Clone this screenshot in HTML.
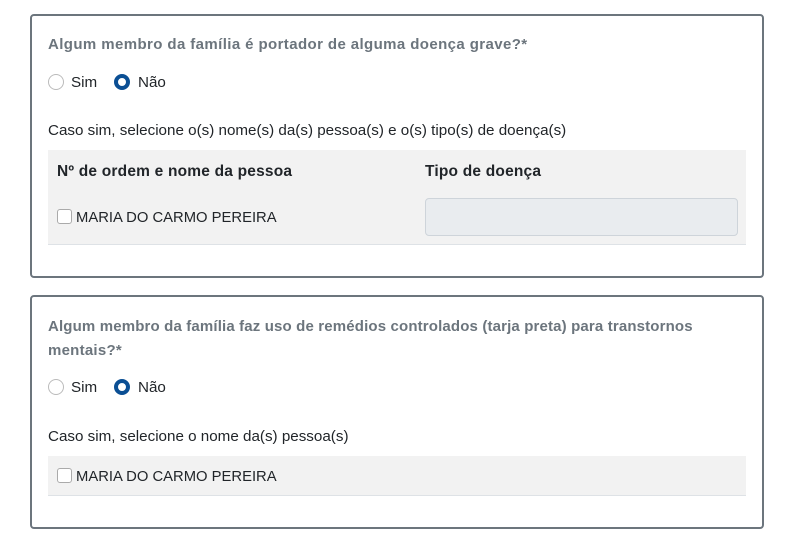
<!DOCTYPE html>
<html><head><meta charset="utf-8"><style>
*{box-sizing:border-box;margin:0;padding:0}
body{width:792px;height:541px;background:#fff;font-family:"Liberation Sans",sans-serif;font-size:15.2px;color:#212529;position:relative;overflow:hidden}
.box{position:absolute;left:30px;width:734px;border:2px solid #6c757d;border-radius:4px}
.t{position:absolute;white-space:nowrap;line-height:18px}
.title{color:#6c757d;font-weight:bold;font-size:15px;letter-spacing:0.25px}
.r{position:absolute;width:16px;height:16px;border-radius:50%}
.off{border:1px solid #bbb;background:#fff}
.on{border:4.5px solid #0b4f94;background:#fff}
.cb{position:absolute;width:15px;height:15px;border:1px solid #aaa;border-radius:3px;background:#fff}
.bg{position:absolute;left:48px;width:698px;background:#f2f2f2;border-bottom:1px solid #dee2e6}
.nm{font-size:14.8px}
</style></head><body>
<div class="box" style="top:14px;height:264px"></div>
<div class="t title" style="left:48px;top:36px;letter-spacing:0.4px">Algum membro da família é portador de alguma doença grave?*</div>
<div class="r off" style="left:48px;top:74px"></div><div class="t" style="left:71px;top:74px">Sim</div>
<div class="r on" style="left:114px;top:74px"></div><div class="t" style="left:138px;top:74px">Não</div>
<div class="t" style="left:48px;top:122px">Caso sim, selecione o(s) nome(s) da(s) pessoa(s) e o(s) tipo(s) de doença(s)</div>
<div class="bg" style="top:150px;height:95px"></div>
<div class="t" style="left:57px;top:163px;font-weight:bold;letter-spacing:0.2px;font-size:15.5px">Nº de ordem e nome da pessoa</div>
<div class="t" style="left:425px;top:163px;font-weight:bold;letter-spacing:0.2px;font-size:15.5px">Tipo de doença</div>
<div class="cb" style="left:57px;top:209px"></div><div class="t nm" style="left:76px;top:209px">MARIA DO CARMO PEREIRA</div>
<div style="position:absolute;left:425px;top:198px;width:313px;height:38px;background:#e9ecef;border:1px solid #ced4da;border-radius:4px"></div>

<div class="box" style="top:295px;height:234px"></div>
<div class="t title" style="left:48px;top:318px;letter-spacing:0.15px">Algum membro da família faz uso de remédios controlados (tarja preta) para transtornos</div>
<div class="t title" style="left:48px;top:342px">mentais?*</div>
<div class="r off" style="left:48px;top:379px"></div><div class="t" style="left:71px;top:379px">Sim</div>
<div class="r on" style="left:114px;top:379px"></div><div class="t" style="left:138px;top:379px">Não</div>
<div class="t" style="left:48px;top:428px">Caso sim, selecione o nome da(s) pessoa(s)</div>
<div class="bg" style="top:456px;height:40px"></div>
<div class="cb" style="left:57px;top:468px"></div><div class="t nm" style="left:76px;top:468px">MARIA DO CARMO PEREIRA</div>
</body></html>
